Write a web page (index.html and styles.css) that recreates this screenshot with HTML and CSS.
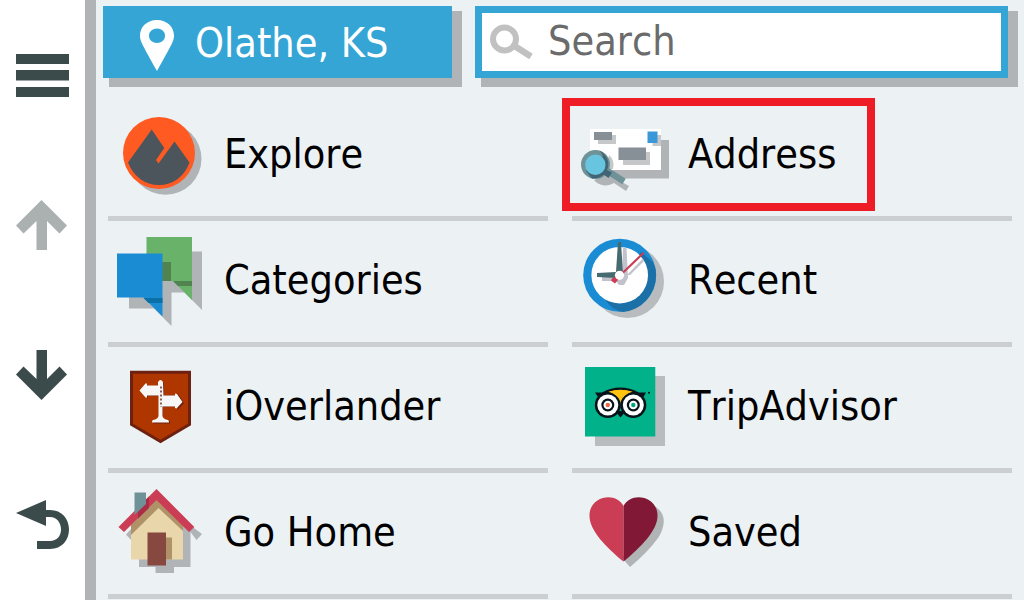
FILE: index.html
```html
<!DOCTYPE html>
<html lang="en">
<head>
<meta charset="utf-8">
<meta name="viewport" content="width=device-width, initial-scale=1">
<title>Where To?</title>
<link rel="stylesheet" href="styles.css">
</head>
<body class="app">
<nav class="rail" aria-label="Controls">
  <button class="rail-button" aria-label="Menu">
    <svg class="rail-icon" viewBox="14 48 56 54"><path d="M16 54h53v10H16zM16 70h53v10.500H16zM16 87h53v10H16z"/></svg>
  </button>
  <button class="rail-button rail-button-off" aria-label="Scroll up" disabled>
    <svg class="rail-icon" viewBox="14 198 56 54"><path d="M41.500 200L67 225.500 59.500 233.500 47 221V250H36.500V221L23.500 233.500 16 225.500Z"/></svg>
  </button>
  <button class="rail-button" aria-label="Scroll down">
    <svg class="rail-icon" viewBox="14 348 56 54"><path d="M41.500 400L67 374.500 59.500 366.500 47 379V350H36.500V379L23.500 366.500 16 374.500Z"/></svg>
  </button>
  <button class="rail-button" aria-label="Back">
    <svg class="rail-icon" viewBox="14 498 56 54"><path d="M16 513L46 500V510H50C62 510 69 519 69 529.500S62 549 50 549H37V541H50C57 541 61 536 61 529.500S57 517 50 517H46V526Z"/></svg>
  </button>
</nav>
<main class="main">
  <header class="top">
    <button class="place">
      <svg class="pin" viewBox="139 19 36 54"><path fill="#fff" fill-rule="evenodd" d="M157 20C147 20 140 27 140 35.500C140 41 142 44 157 71C172 44 174 41 174 35.500C174 27 167 20 157 20ZM157 28.500A8 7.200 0 1 1 157 43A8 7.200 0 1 1 157 28.500Z"/></svg>
      <span>Olathe, KS</span>
    </button>
    <div class="search">
      <label class="search-label" for="search" aria-label="Search">
        <svg class="glass" viewBox="488 20 46 42"><ellipse cx="504.500" cy="38" rx="11.500" ry="11.500" fill="none" stroke="#c1c1c1" stroke-width="6"/><path d="M514.500 45L531 55.500" stroke="#c1c1c1" stroke-width="6.500"/></svg>
      </label>
      <input class="search-input" id="search" type="text" placeholder="Search">
    </div>
  </header>
  <div class="list">
    <button class="item">
      <svg class="item-icon" viewBox="108 95 114 121">
        <circle cx="165.500" cy="158.800" r="36" fill="#b0b4b7"/>
        <circle cx="159" cy="153" r="36" fill="#ff5a22"/>
        <path fill="#4b555b" d="M128 162.500L151.700 129.500 164.300 148 156 160 158.500 163.500 174.500 141.500 189.500 162.500C184 177 173 185 159 185S134 177 128 162.500Z"/>
      </svg>
      <span class="item-label">Explore</span>
    </button>
    <button class="item">
      <svg class="item-icon" viewBox="572 95 114 121">
        <path fill="#b0b4b7" d="M598 140H669V178.500H598Z"/>
        <path fill="#fff" d="M590 129H661V170H590Z"/>
        <path fill="#c6c7c8" d="M598 135H616V144H598ZM623 152H650V165H623ZM652.500 135H661V146H652.500Z"/>
        <path fill="#879097" d="M594 132H612V140H594ZM618.500 147.500H646V160H618.500Z"/>
        <path fill="#3a97d8" d="M647.500 131.500H657.500V143H647.500Z"/>
        <path fill="#c6c7c8" d="M609 155Q615 160 613 169L606 169Z"/>
        <path fill="#b0b4b7" d="M594 180A14 12 0 0 0 614 183L626 191 629 186 608 174Z"/>
        <path d="M606 170L624 181.500" stroke="#6f9298" stroke-width="6.500"/>
        <circle cx="595.500" cy="164.500" r="14.500" fill="#6f9298"/>
        <path fill="#416575" d="M600 151A14.500 14.500 0 0 1 592 178.500L586 171 603 156ZM606 169.500L612 172.500 608.500 178 603 174Z"/>
        <circle cx="595.300" cy="164.700" r="10.200" fill="#68c5df"/>
      </svg>
      <span class="item-label">Address</span>
      <span class="mark"></span>
    </button>
    <button class="item">
      <svg class="item-icon" viewBox="108 221 114 121">
        <path fill="#b0b4b7" d="M192 251.500H202V310L184.500 292.500H171.500V326L154 308.500H129V290H162V280H192Z"/>
        <path fill="#69b26a" d="M146.500 237H192V300L173 281H146.500Z"/>
        <path fill="#50834f" d="M162 262H171V281H162ZM173 281H192V286H178Z"/>
        <path fill="#1a8cd4" d="M117 253.500H162.500V316.500L143.500 297.500H117Z"/>
        <path fill="#0a70a5" d="M143.500 298H162.500V303H148.500Z"/>
      </svg>
      <span class="item-label">Categories</span>
    </button>
    <button class="item">
      <svg class="item-icon" viewBox="572 221 114 121">
        <circle cx="627.500" cy="281.500" r="36.500" fill="#b8bcbf"/>
        <circle cx="619.700" cy="275.300" r="36.500" fill="#1a8cd4"/>
        <path fill="#1c70a8" d="M641 252L649 259Q656 263 656 275A36.500 36.500 0 0 1 623 312Q612 310 606 301Z"/>
        <circle cx="619.700" cy="275.200" r="28.300" fill="#fff"/>
        <path fill="#c1c2cb" d="M623 248H626.500L628 278 624 285 619 285 616 281H602V277L622 276ZM627 275L642.500 259 644 261 630 275Z"/>
        <path fill="#476970" d="M618 242H621L623 274 616 278 597 277V273L616 272Z"/>
        <path fill="#cb3c55" d="M643 252L644.500 253.500 622 275 615 283.500 611 280.500 612 278.500 619 275Z"/>
        <circle cx="619.500" cy="275.300" r="4.600" fill="#fff"/>
      </svg>
      <span class="item-label">Recent</span>
    </button>
    <button class="item">
      <svg class="item-icon" viewBox="108 347 114 121">
        <path fill="#b03600" stroke="#6d2110" stroke-width="3" d="M131.500 372.300H189.500V424.500L160.500 441.500 131.500 424.500Z"/>
        <path fill="#6d2110" transform="translate(1 1)" d="M158 382L160.500 380 163 382V394.500H176.500V392L183 402 176.500 409V406H162V417Q163 419 169 420V422.500H152V420Q158 419 159 417V395H147V397L140 390 147 384V386H158Z"/>
        <path fill="#f7f7f7" d="M158 385.500V382Q160.500 378 163 382L163.500 395.500H175V393.500L177 394 182.500 402 176.500 408.500 175 408V406.500H162.500V416Q163 419 168 420Q169 420 169 422.500H152Q152 420 153 420Q158 419 158.500 416V395.500H147V397.500L145.500 397.500 139.500 390.500 145.500 383.500 147 383.500V385.500Z"/>
        <path fill="none" stroke="#65301c" stroke-width="1.500" stroke-dasharray="2 2" d="M161 386.500V407"/>
      </svg>
      <span class="item-label">iOverlander</span>
    </button>
    <button class="item">
      <svg class="item-icon" viewBox="572 347 114 121">
        <path fill="#b8bcbf" d="M595 376H665V446H595Z"/>
        <path fill="#00b189" d="M585 367H655.300V436.500H585Z"/>
        <path fill="#07131b" d="M595 392.500H602Q620 382.500 639 392.500H646L643.500 397H598Z"/>
        <path fill="#ffc20e" d="M608 392Q620.500 388 633 392Q622 396 620.500 405Q618 396 608 392Z"/>
        <circle cx="607.800" cy="405" r="13" fill="#07131b"/><circle cx="633.300" cy="405" r="13" fill="#07131b"/>
        <path fill="#ffc20e" d="M609 391.500Q620.500 388 632 391.500Q623 395 620.500 402Q618 395 609 391.500Z"/>
        <path fill="#07131b" d="M615 411H626L620.500 417.500Z"/>
        <circle cx="607.800" cy="405" r="10.500" fill="#fff"/><circle cx="633.300" cy="405" r="10.500" fill="#fff"/>
        <circle cx="607.800" cy="405" r="6.500" fill="#07131b"/><circle cx="633.300" cy="405" r="6.500" fill="#07131b"/>
        <circle cx="607.800" cy="405" r="4.300" fill="#fff"/><circle cx="633.300" cy="405" r="4.300" fill="#fff"/>
        <circle cx="607.800" cy="405" r="2.200" fill="#ef6945"/><circle cx="633.300" cy="405" r="2.200" fill="#00a680"/>
        <circle cx="649" cy="392.800" r="1" fill="#07131b"/>
      </svg>
      <span class="item-label">TripAdvisor</span>
    </button>
    <button class="item">
      <svg class="item-icon" viewBox="108 473 114 121">
        <path fill="#b0b4b7" d="M126 534.500L132 528V541ZM139 559V567H155.500V573H174V567H190.500V532L196.500 540 202 534 190 525H180V559Z"/>
        <path fill="#e9d6aa" d="M131 527L157 501 183 527V559.500H131Z"/>
        <path fill="#af9268" d="M131 525L156.500 498 183 525V531L158.500 508 131 535ZM166 537.500H172V559.500H166Z"/>
        <path fill="#cb3c55" d="M156.500 489L194.300 527 189 532 156.500 500 124 532 118.500 527Z"/>
        <path fill="#aa2d45" d="M146 499.500L149 496.500V508L138 518.500V508Z"/>
        <path fill="#6f9298" d="M134.500 492.500H146V504L134.500 515Z"/>
        <path fill="#87483f" d="M147.500 532.500H166V565.500H147.500Z"/>
      </svg>
      <span class="item-label">Go Home</span>
    </button>
    <button class="item">
      <svg class="item-icon" viewBox="572 473 114 121">
        <path fill="#b0b4b5" d="M630 567L622 558 650 506 656 507C667 515 665 527 658 538Q648 552 630 567Z"/>
        <path fill="#cb3c55" d="M623.500 561.500C606 547 589 530 589.500 515C590 496 616 491 623.500 506Z"/>
        <path fill="#811936" d="M623.500 561.500C641 547 658 530 657.500 515C657 496 631 491 623.500 506Z"/>
      </svg>
      <span class="item-label">Saved</span>
    </button>
  </div>
</main>
</body>
</html>
```

FILE: styles.css
```css
* {
  box-sizing: border-box;
}

.app {
  display: flex;
  min-height: 100vh;
  margin: 0;
  background: #ecf1f4;
  color: #000;
  font-family: "DejaVu Sans Condensed", "DejaVu Sans", sans-serif;
  font-size: 41px;
  font-kerning: none;
  line-height: 48px;
}

button,
input {
  margin: 0;
  padding: 0;
  border: 0;
  border-radius: 0;
  background: none;
  color: inherit;
  font: inherit;
  font-kerning: inherit;
}

svg {
  display: block;
  flex: none;
}

.rail {
  display: grid;
  flex: none;
  grid-template-rows: repeat(4, 1fr);
  width: 96px;
  border-right: 11px solid #b0b4b7;
  background: #fff;
}

.rail-button {
  display: flex;
  align-items: center;
  padding-left: 14px;
  color: #3b4a4a;
}

.rail-button-off {
  color: #abb1b1;
}

.rail-icon {
  width: 56px;
  height: 54px;
  fill: currentColor;
}

.main {
  flex: 1;
  min-width: 0;
}

.top {
  display: grid;
  grid-template-columns: 349fr 533fr;
  gap: 23px;
  padding: 6px 16px 17px 7px;
}

.place,
.search {
  display: flex;
  align-items: center;
  min-width: 0;
  height: 72px;
  background: #34a5d4;
  box-shadow: 8px 7px 0 2px #b0b4b7;
}

.place {
  gap: 20px;
  padding: 2px 36px 0;
  color: #fff;
}

.pin {
  width: 36px;
  height: 54px;
  margin-top: 6px;
}

.search {
  padding-left: 6px;
  border: 7px solid #34a5d4;
  background: #fff;
}

.glass {
  width: 46px;
  height: 42px;
}

.search-input {
  flex: 1;
  min-width: 0;
  height: 48px;
  margin: 0 14px 2px;
  outline: 0;
}

.search-input::placeholder {
  color: #6b6b6b;
  opacity: 1;
}

.list {
  display: grid;
  grid-template-columns: 1fr 1fr;
  column-gap: 24px;
  padding: 0 12px;
}

.item {
  position: relative;
  display: flex;
  align-items: center;
  gap: 2px;
  min-height: 126px;
  border-bottom: 5px solid #cbcfd2;
  text-align: left;
  white-space: nowrap;
}

.item-icon {
  width: 114px;
  height: 121px;
}

.item-label {
  padding-bottom: 4px;
}

.mark {
  position: absolute;
  top: 3px;
  left: -10px;
  width: 313px;
  height: 113px;
  border: 8px solid #ee1c25;
}
```
